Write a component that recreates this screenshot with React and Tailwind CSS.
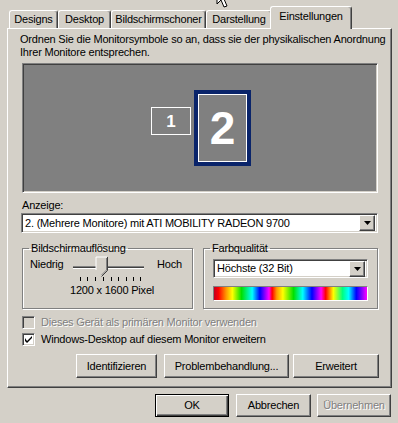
import React from 'react';

const raised =
  'border border-t-white border-l-white border-r-[#404040] border-b-[#404040] shadow-[inset_-1px_-1px_#808080]';
const sunken =
  'border border-t-[#808080] border-l-[#808080] border-r-white border-b-white shadow-[inset_1px_1px_#404040,inset_-1px_-1px_#d4d0c8]';

const Tab = ({ label, width, active }) => (
  <div
    className={`flex items-center justify-center rounded-t-[3px] border border-b-0 border-t-white border-l-white border-r-[#404040] shadow-[inset_-1px_0_#808080] bg-[#d4d0c8] ${
      active ? 'h-[23px] -mb-[1px] -ml-[2px] z-10 pb-[3px]' : 'h-[18px]'
    }`}
    style={{ width }}
  >
    {label}
  </div>
);

const DropArrow = () => (
  <div className={`w-[16px] h-[16px] bg-[#d4d0c8] flex items-center justify-center ${raised}`}>
    <svg width="7" height="4" viewBox="0 0 7 4">
      <path d="M0 0h7L3.5 4z" fill="#000" />
    </svg>
  </div>
);

const Select = ({ text, className }) => (
  <div className={`bg-white flex items-center justify-between pl-[3px] pr-[2px] ${sunken} ${className}`}>
    <span>{text}</span>
    <DropArrow />
  </div>
);

const Checkbox = ({ checked, disabled, label }) => (
  <div className="flex items-center h-[13px]">
    <div
      className={`w-[13px] h-[13px] flex items-center justify-center ${sunken} ${
        disabled ? 'bg-[#d4d0c8]' : 'bg-white'
      }`}
    >
      {checked && (
        <svg width="7" height="7" viewBox="0 0 7 7">
          <path d="M0 2v3l2 2 5-5V-0L2 5z" fill="#000" />
        </svg>
      )}
    </div>
    <span
      className={`ml-[6px] ${disabled ? 'text-[#808080] [text-shadow:1px_1px_0_#fff]' : ''}`}
    >
      {label}
    </span>
  </div>
);

const Button = ({ children, className, disabled, isDefault }) => (
  <div
    className={`flex items-center justify-center bg-[#d4d0c8] ${
      isDefault
        ? 'border border-black shadow-[inset_1px_1px_white,inset_-1px_-1px_#404040,inset_-2px_-2px_#808080]'
        : raised
    } ${disabled ? 'text-[#808080] [text-shadow:1px_1px_0_#fff]' : ''} ${className}`}
  >
    {children}
  </div>
);

const Slider = () => {
  const ticks = [10, 17, 25, 33, 41, 48, 56, 63, 70];
  return (
    <svg width="80" height="28" viewBox="0 0 80 28">
      <rect x="3" y="11" width="71" height="1" fill="#808080" />
      <rect x="3" y="12" width="71" height="1" fill="#404040" />
      <rect x="3" y="13" width="71" height="1" fill="#ffffff" />
      {ticks.map((x) => (
        <rect key={x} x={x} y="22" width="1" height="4" fill="#000" />
      ))}
      <path d="M26 2h11v13l-5.5 6L26 15z" fill="#d4d0c8" />
      <path d="M26 15V2h11" stroke="#fff" fill="none" />
      <path d="M37.5 2v13.5l-6 6" stroke="#404040" fill="none" />
      <path d="M36.5 3v12l-5 5" stroke="#808080" fill="none" />
    </svg>
  );
};

const Group = ({ title, className, children }) => (
  <fieldset
    className={`border border-[#808080] shadow-[inset_1px_1px_white,1px_1px_white] h-[67px] ${className}`}
  >
    <legend className="ml-[6px] px-[2px] leading-[13px]">{title}</legend>
    {children}
  </fieldset>
);

export default function App() {
  return (
    <div className="w-[398px] h-[423px] bg-[#d4d0c8] relative overflow-hidden text-[11px] leading-[13px] tracking-[-0.2px] whitespace-nowrap text-black font-['Liberation_Sans',Arial,sans-serif]">
      {/* mouse pointer peeking in from above */}
      <svg className="absolute left-[216px] top-[-12px] z-20" width="20" height="22" viewBox="0 0 20 22">
        <path d="M1 1v15l4-4 3 7 3-1-3-7h6z" fill="#fff" stroke="#000" strokeWidth="1" />
      </svg>

      <div className="flex items-end h-[28px] pl-[9px] relative z-10">
        <Tab label="Designs" width={49} />
        <Tab label="Desktop" width={53} />
        <Tab label="Bildschirmschoner" width={95} />
        <Tab label="Darstellung" width={66} />
        <Tab label="Einstellungen" width={82} active />
      </div>

      <div className="ml-[7px] w-[385px] h-[360px] border border-t-white border-l-white border-r-[#404040] border-b-[#404040] shadow-[inset_-1px_-1px_#808080] flex flex-col">
        <p className="mt-[4px] ml-[12px]">
          Ordnen Sie die Monitorsymbole so an, dass sie der physikalischen Anordnung
          <br />
          Ihrer Monitore entsprechen.
        </p>

        <div className={`relative mt-[4px] ml-[14px] w-[356px] h-[130px] bg-[#808080] ${sunken}`}>
          <div className="absolute left-[128px] top-[43px] w-[40px] h-[28px] border border-white flex items-center justify-center text-white font-bold text-[17px]">
            1
          </div>
          <div className="absolute left-[171px] top-[26px] w-[57px] h-[76px] border-4 border-[#0a246a]">
            <div className="w-full h-full border border-white flex items-center justify-center text-white font-bold text-[46px] leading-none">
              2
            </div>
          </div>
        </div>

        <div className="mt-[6px] ml-[14px]">Anzeige:</div>
        <Select
          text="2. (Mehrere Monitore) mit ATI MOBILITY RADEON 9700"
          className="mt-[1px] ml-[13px] w-[357px] h-[20px]"
        />

        <div className="flex mt-[9px] ml-[14px] gap-[10px]">
          <Group title="Bildschirmauflösung" className="w-[171px]">
            <div className="flex items-start pl-[7px]">
              <span className="mt-[3px] w-[40px]">Niedrig</span>
              <Slider />
              <span className="mt-[3px] ml-[7px]">Hoch</span>
            </div>
            <div className="ml-[47px] mt-[1px]">1200 x 1600 Pixel</div>
          </Group>
          <Group title="Farbqualität" className="w-[175px]">
            <Select text="Höchste (32 Bit)" className="mt-[4px] ml-[9px] w-[155px] h-[19px]" />
            <div className="mt-[8px] ml-[9px] w-[155px] h-[15px] border border-t-[#808080] border-l-[#808080] border-r-white border-b-white bg-[linear-gradient(90deg,#c00020,#ff0000_3%,#ff9900_8%,#ffff00_12%,#00e000_18%,#00ffff_25%,#0000ff_30%,#ff00ff_36%,#ff0000_38%,#ff9900_41%,#ffff00_45%,#00e000_52%,#00ffff_58%,#0000ff_64%,#ff00ff_70%,#ff0000_73%,#ffff00_78%,#00ff80_84%,#00ffff_88%,#0000ff_93%,#ff00ff)]" />
          </Group>
        </div>

        <div className="mt-[7px] ml-[14px] flex flex-col gap-[4px]">
          <Checkbox disabled label="Dieses Gerät als primären Monitor verwenden" />
          <Checkbox checked label="Windows-Desktop auf diesem Monitor erweitern" />
        </div>

        <div className="mt-[8px] ml-[68px] flex">
          <Button className="w-[81px] h-[24px]">Identifizieren</Button>
          <Button className="ml-[7px] w-[125px] h-[24px]">Problembehandlung...</Button>
          <Button className="ml-[4px] w-[86px] h-[24px]">Erweitert</Button>
        </div>
      </div>

      <div className="flex mt-[6px] ml-[155px]">
        <Button isDefault className="w-[74px] h-[23px]">OK</Button>
        <Button className="ml-[7px] w-[75px] h-[23px]">Abbrechen</Button>
        <Button disabled className="ml-[6px] w-[74px] h-[23px]">Übernehmen</Button>
      </div>
    </div>
  );
}
